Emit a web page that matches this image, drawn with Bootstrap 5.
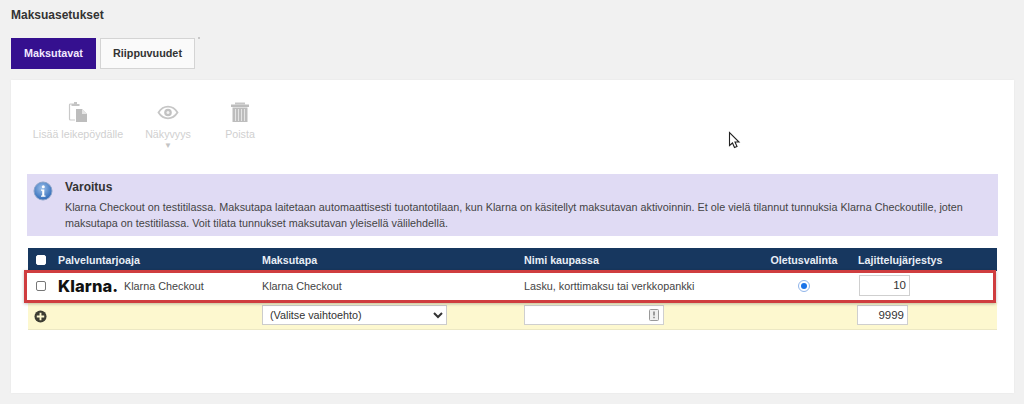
<!DOCTYPE html>
<html lang="fi">
<head>
  <meta charset="utf-8">
  <title>Maksuasetukset</title>
  <link rel="stylesheet" href="https://cdn.jsdelivr.net/npm/bootstrap@5.3.0/dist/css/bootstrap.min.css">
  <style>
    html, body { height: 404px; overflow: hidden; }
    body { background: #f1f1f1; color: #333; font: 10px/14px "Liberation Sans", Arial, sans-serif; position: relative; }
    .page-wrap { padding: 8px 10px 0 11px; }
    .page-title { font-size: 12px; font-weight: 700; line-height: 14px; margin: 0 0 16px; color: #333; }
    .tab-row { height: 31px; margin-bottom: 11px; }
    .tab-btn { font-size: 10.8px; font-weight: 700; height: 31px; border-radius: 0; padding: 0; color: #333; background: #fafafa; border: 1px solid #d4d4d4; }
    .tab-active { width: 85px; background: #35108f; border-color: #35108f; color: #f1e9ff; }
    .tab-other { width: 95px; margin-left: 4px; }
    .panel-box { background: #fff; height: 313px; padding: 0 16px; box-shadow: 0 0 2px #e6e6e6; }
    .tool-row { height: 94px; padding-top: 21px; padding-left: 6px; }
    .tool-item { color: #d0d0d0; text-align: center; font-size: 10.7px; line-height: 13px; }
    .tool-item svg { display: block; margin: 0 auto 5px; }
    .tool-copy { width: 92px; margin-left: -1px; }
    .tool-view { width: 46px; margin-left: 21px; padding-top: 2px; }
    .tool-view svg { margin-bottom: 6px; }
    .tool-del { width: 30px; margin-left: 34px; }
    .tool-caret { font-size: 8px; line-height: 10px; color: #c4c4c4; }
    .notice-box { background: #e0dbf4; height: 62px; padding: 5px 8px 0 6px; color: #444; }
    .notice-icon { width: 20px; margin-right: 12px; padding-top: 2px; flex: none; }
    .notice-title { font-size: 12px; font-weight: 700; line-height: 16px; margin-bottom: 4px; color: #333; }
    .notice-text { font-size: 10.8px; line-height: 16px; width: 905px; }
    .pay-table { width: 969px; margin: 12px 0 0 1px; table-layout: fixed; border-collapse: collapse; }
    .pay-table th { background: #17375f; color: #e8eef6; font-size: 10.7px; height: 23px; font-weight: 700; padding: 0; }
    .pay-table td { padding: 0; font-size: 10.8px; color: #444; }
    .pay-table .row-item td { background: #fff; height: 31px; padding-bottom: 2px; }
    .row-new td { background: #fdf8cf; height: 27px; border-bottom: 1px solid #ece8c4; }
    .col-check { width: 30px; }
    .col-prov { width: 204px; }
    .col-method { width: 262px; }
    .col-name { width: 232px; }
    .col-def { width: 96px; }
    .cell-center { text-align: center; }
    .pay-table .cell-sort { padding-left: 6px; }
    .pay-check { display: block; margin: 0 0 0 8px; width: 10px; height: 10px; border: 1px solid #777; border-radius: 2px; background: #fff; }
    .head-check { border-color: #fff; }
    .klarna-logo { flex: none; width: 66px; font: 800 16.5px/18px Inter, "Liberation Sans", sans-serif; color: #111; letter-spacing: .1px; }
    .def-radio { display: inline-block; width: 12px; height: 12px; border-radius: 50%; background: #fff; border: 1px solid #8fb4ea; position: relative; top: 2px; }
    .def-radio::after { content: ""; position: absolute; left: 2px; top: 2px; width: 6px; height: 6px; border-radius: 50%; background: #1a73e8; }
    .num-input { display: block; height: 21px; line-height: 19px; width: 51px; border: 1px solid #cfcfcf; background: #fff; text-align: right; font-size: 11.5px; padding: 0 3px; color: #333; }
    .num-first { margin-left: 1px; }
    .num-second { margin-left: -1px; height: 20px; line-height: 18px; }
    .pick-select { width: 185px; height: 20px; font-size: 10.8px; border: 1px solid #ccc; background: #fff; color: #333; padding: 0 0 0 3px; font-family: inherit; display: block; }
    .name-input { width: 140px; height: 20px; border: 1px solid #cfcfcf; background: #fff; padding-right: 4px; }
    .add-icon { display: block; margin: 3px 0 0 6px; }
    .mark-frame { position: absolute; left: 24px; top: 270px; width: 972px; height: 33px; border: 3px solid #cf3d3f; box-shadow: 0 1px 3px rgba(0,0,0,.25); pointer-events: none; }
    .mouse-arrow { position: absolute; left: 728px; top: 131px; }
    .tab-dot { position: absolute; left: 198px; top: 37px; width: 2px; height: 2px; background: #c8c8c8; }
  </style>
</head>
<body>
  <div class="page-wrap">
    <h1 class="page-title">Maksuasetukset</h1>

    <div class="tab-row d-flex">
      <button class="btn tab-btn tab-active" type="button">Maksutavat</button>
      <button class="btn tab-btn tab-other" type="button">Riippuvuudet</button>
    </div>

    <div class="panel-box">
      <div class="tool-row d-flex align-items-start">
        <div class="tool-item tool-copy">
          <svg width="22" height="22" viewBox="0 0 22 22"><path d="M8 3H3.500a1 1 0 0 0-1 1v14a1 1 0 0 0 1 1H8" fill="none" stroke="#c9c9c9" stroke-width="1.200"/><path d="M4.500 3h8v2h-8z" fill="#c4c4c4"/><path d="M7 1h3v2H7z" fill="#c4c4c4"/><path d="M9 8h6l5 5v8H9z" fill="#bdbdbd"/><path d="M15 8v5h5z" fill="#e6e6e6"/></svg>
          Lisää leikepöydälle
        </div>
        <div class="tool-item tool-view">
          <svg width="22" height="19" viewBox="0 0 22 19"><path d="M1.500 9.500C4 5.600 7.300 3.700 11 3.700s7 1.900 9.500 5.800c-2.500 3.900-5.800 5.800-9.500 5.800s-7-1.900-9.500-5.800z" fill="none" stroke="#c6c6c6" stroke-width="1.800"/><circle cx="11" cy="9.500" r="3.800" fill="#c2c2c2"/><circle cx="11" cy="9.500" r="1.500" fill="#f2f2f2"/></svg>
          Näkyvyys
          <div class="tool-caret">▼</div>
        </div>
        <div class="tool-item tool-del">
          <svg width="20" height="22" viewBox="0 0 20 22"><path d="M1 3.500h18V6H1z" fill="#bdbdbd"/><path d="M5 1.500h10v2H5z" fill="#c6c6c6"/><path d="M2.500 6.500h15V21h-15z" fill="#bdbdbd"/><path d="M5.500 8v12M8.500 8v12M11.500 8v12M14.500 8v12" stroke="#e4e4e4" stroke-width="1"/></svg>
          Poista
        </div>
      </div>

      <div class="notice-box d-flex">
        <div class="notice-icon">
          <svg width="20" height="20" viewBox="0 0 20 20"><defs><radialGradient id="infoFill" cx=".45" cy=".35" r=".75"><stop offset="0" stop-color="#9cc0ea"/><stop offset="1" stop-color="#1d5cb0"/></radialGradient></defs><circle cx="10" cy="10" r="9" fill="url(#infoFill)" stroke="#8ba4c9"/><circle cx="10.300" cy="5.800" r="1.500" fill="#fff"/><path d="M8 8.500h3.300v6h1.200v1.200H8v-1.200h1.200V9.700H8z" fill="#fff"/></svg>
        </div>
        <div>
          <div class="notice-title">Varoitus</div>
          <div class="notice-text">Klarna Checkout on testitilassa. Maksutapa laitetaan automaattisesti tuotantotilaan, kun Klarna on käsitellyt maksutavan aktivoinnin. Et ole vielä tilannut tunnuksia Klarna Checkoutille, joten maksutapa on testitilassa. Voit tilata tunnukset maksutavan yleisellä välilehdellä.</div>
        </div>
      </div>

      <table class="pay-table">
        <colgroup>
          <col class="col-check"><col class="col-prov"><col class="col-method"><col class="col-name"><col class="col-def"><col>
        </colgroup>
        <thead>
          <tr>
            <th><span class="pay-check head-check"></span></th>
            <th>Palveluntarjoaja</th>
            <th>Maksutapa</th>
            <th>Nimi kaupassa</th>
            <th class="cell-center">Oletusvalinta</th>
            <th class="cell-sort">Lajittelujärjestys</th>
          </tr>
        </thead>
        <tbody>
          <tr class="row-item">
            <td><span class="pay-check"></span></td>
            <td><div class="d-flex align-items-center"><span class="klarna-logo">Klarna.</span><span>Klarna Checkout</span></div></td>
            <td>Klarna Checkout</td>
            <td>Lasku, korttimaksu tai verkkopankki</td>
            <td class="cell-center"><span class="def-radio"></span></td>
            <td class="cell-sort"><div class="num-input num-first">10</div></td>
          </tr>
          <tr class="row-new">
            <td>
              <svg class="add-icon" width="13" height="13" viewBox="0 0 14 14"><circle cx="7" cy="7" r="6.500" fill="#3d3d33"/><path d="M6 3h2v3h3v2H8v3H6V8H3V6h3z" fill="#fdf8cf"/></svg>
            </td>
            <td></td>
            <td>
              <select class="pick-select"><option>(Valitse vaihtoehto)</option></select>
            </td>
            <td>
              <div class="name-input d-flex align-items-center justify-content-end">
                <svg width="10" height="12" viewBox="0 0 10 12"><rect x=".5" y=".5" width="9" height="11" rx="1" fill="#eee" stroke="#999"/><path d="M4.300 2.500h1.400v4H4.300zM4.300 7.800h1.400v1.500H4.300z" fill="#777"/></svg>
              </div>
            </td>
            <td></td>
            <td class="cell-sort"><div class="num-input num-second">9999</div></td>
          </tr>
        </tbody>
      </table>
    </div>
  </div>

  <span class="tab-dot"></span>
  <div class="mark-frame"></div>
  <svg class="mouse-arrow" width="13" height="19" viewBox="0 0 13 19"><path d="M1.500 1.500v13l3-2.500 2 4.500 2.500-1-2-4.500h4z" fill="#fff" stroke="#222" stroke-width="1.100"/></svg>
</body>
</html>
